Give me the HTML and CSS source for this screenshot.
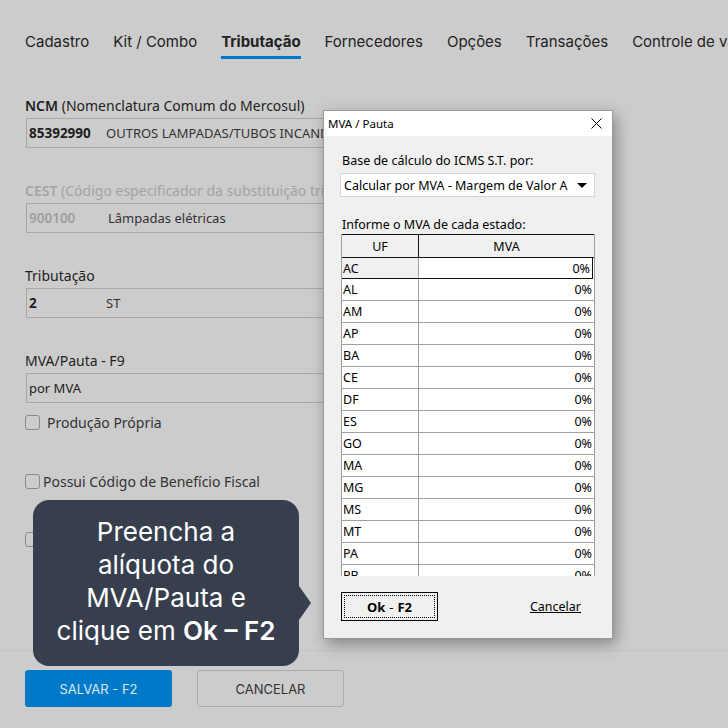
FILE: index.html
```html
<!DOCTYPE html>
<html lang="pt-BR">
<head>
    <meta charset="UTF-8">
    <title>Produto - Tributação</title>
    <link rel="stylesheet" href="styles.css">
</head>
<body>
    <nav class="tabs">
        <span class="tab">Cadastro</span>
        <span class="tab">Kit / Combo</span>
        <span class="tab active">Tributação</span>
        <span class="tab">Fornecedores</span>
        <span class="tab">Opções</span>
        <span class="tab">Transações</span>
        <span class="tab">Controle de validade</span>
    </nav>

    <div class="form">
        <div class="field">
            <label class="field-label"><b>NCM</b> (Nomenclatura Comum do Mercosul)</label>
            <div class="field-box">
                <span class="code">85392990</span>
                <span class="desc">OUTROS LAMPADAS/TUBOS INCANDESCENTES</span>
            </div>
        </div>

        <div class="field disabled">
            <label class="field-label"><b>CEST</b> (Código especificador da substituição tributária)</label>
            <div class="field-box">
                <span class="code">900100</span>
                <span class="desc">Lâmpadas elétricas</span>
            </div>
        </div>

        <div class="field">
            <label class="field-label">Tributação</label>
            <div class="field-box">
                <span class="code">2</span>
                <span class="desc">ST</span>
            </div>
        </div>

        <div class="field last">
            <label class="field-label">MVA/Pauta - F9</label>
            <div class="field-box">
                <span class="plain">por MVA</span>
            </div>
        </div>

        <label class="check"><span class="box"></span>Produção Própria</label>
        <label class="check second"><span class="box"></span>Possui Código de Benefício Fiscal</label>
        <label class="check third"><span class="box"></span></label>
    </div>

    <footer class="actions">
        <button class="btn btn-primary">SALVAR - F2</button>
        <button class="btn btn-outline">CANCELAR</button>
    </footer>

    <!-- dialog -->
    <div class="dialog">
        <div class="dialog-title">
            <span>MVA / Pauta</span>
            <svg class="close" width="11" height="11" viewBox="0 0 11 11">
                <path d="M0.5 0.5 L10.5 10.5 M10.5 0.5 L0.5 10.5" stroke="#000" stroke-width="1"/>
            </svg>
        </div>
        <div class="dialog-body">
            <div class="dlg-label">Base de cálculo do ICMS S.T. por:</div>
            <div class="select">
                <span>Calcular por MVA - Margem de Valor A</span>
                <span class="arrow"></span>
            </div>

            <div class="dlg-label second">Informe o MVA de cada estado:</div>
            <div class="grid">
                <div class="grid-head">
                    <div class="col-uf">UF</div>
                    <div class="col-mva">MVA</div>
                </div>
                <div class="grid-rows" id="rows"></div>
            </div>

            <div class="dialog-foot">
                <button class="ok-btn"><span><b>Ok</b> - <b>F2</b></span></button>
                <a class="cancel-link">Cancelar</a>
            </div>
        </div>
    </div>

    <!-- tooltip -->
    <div class="tip">
        <p>Preencha a<br>alíquota do<br>MVA/Pauta e<br>clique em <b>Ok – F2</b></p>
    </div>

    <script>
        const ufs = ['AC', 'AL', 'AM', 'AP', 'BA', 'CE', 'DF', 'ES', 'GO', 'MA', 'MG', 'MS', 'MT', 'PA', 'PB', 'PE'];
        const rows = document.getElementById('rows');
        ufs.forEach(function(uf, i) {
            const row = document.createElement('div');
            row.className = 'grid-row' + (i === 0 ? ' selected' : '');
            row.innerHTML = '<div class="col-uf">' + uf + '</div><div class="col-mva">0%</div>';
            rows.appendChild(row);
        });
    </script>
</body>
</html>
```

FILE: styles.css
```css
* {
    margin: 0;
    padding: 0;
    box-sizing: border-box;
}

body {
    font-family: 'Noto Sans', sans-serif;
    background: #cccccc;
    width: 728px;
    height: 728px;
    overflow: hidden;
    position: relative;
    color: #1e1e1e;
}

.tabs {
    display: flex;
    gap: 24px;
    padding: 31px 0 0 25px;
    height: 59px;
    font-family: 'Inter', sans-serif;
    font-size: 15px;
    white-space: nowrap;
    color: #222;
    overflow: hidden;
}

.tab {
    height: 28px;
    line-height: 22px;
}

.tab.active {
    font-weight: 700;
    border-bottom: 3px solid #0079c9;
}

.form {
    padding: 37px 0 0 25px;
    height: 591px;
}

.field {
    margin-bottom: 33px;
}

.field.last {
    margin-bottom: 9px;
}

.field-label {
    display: block;
    font-size: 14px;
    line-height: 20px;
    margin-bottom: 2px;
    white-space: nowrap;
}

.field-label b {
    font-weight: 600;
}

.field.disabled .field-label {
    color: #a3a3a3;
}

.field-box {
    width: 450px;
    height: 30px;
    margin-left: 1px;
    border: 1px solid #a6a6a6;
    display: flex;
    align-items: center;
    padding-left: 2px;
    font-size: 13px;
}

.code {
    width: 77px;
    font-weight: 700;
    font-size: 13.5px;
}

.field.disabled .code {
    color: #9e9e9e;
    width: 79px;
    font-weight: 600;
}

.desc {
    color: #333;
    white-space: nowrap;
}

.plain {
    color: #222;
}

.check {
    display: flex;
    align-items: center;
    gap: 7px;
    font-size: 14px;
    height: 20px;
    color: #333;
}

.check .box {
    width: 15px;
    height: 15px;
    border: 1px solid #8a8a8a;
    border-radius: 3px;
}

.check.second {
    margin-top: 39px;
    gap: 3px;
}

.check.third {
    margin-top: 38px;
}

.actions {
    border-top: 1px solid #c4c4c4;
    display: flex;
    gap: 25px;
    padding: 19px 0 0 25px;
    height: 78px;
}

.btn {
    width: 147px;
    height: 37px;
    border-radius: 3px;
    font-family: 'Inter', sans-serif;
    font-size: 13px;
}

.btn-primary {
    background: #0079c9;
    border: none;
    color: #dde6ee;
}

.btn-outline {
    background: transparent;
    border: 1px solid #acacac;
    color: #333;
}

/* dialog */
.dialog {
    position: absolute;
    left: 323px;
    top: 110px;
    width: 290px;
    height: 529px;
    border: 1px solid #999;
    background: #f0f0f0;
    box-shadow: 3px 5px 14px rgba(0,0,0,0.35);
    font-family: 'Noto Sans', sans-serif;
    color: #000;
}

.dialog-title {
    height: 25px;
    background: #fff;
    display: flex;
    align-items: center;
    justify-content: space-between;
    padding: 0 10px 0 4px;
    font-size: 11.5px;
}

.dialog-body {
    padding: 16px 0 0 17px;
}

.dlg-label {
    font-size: 12.5px;
    line-height: 17px;
    margin-left: 1px;
}

.dlg-label.second {
    margin-top: 19px;
}

.select {
    margin-top: 4px;
    width: 255px;
    height: 24px;
    background: #fff;
    border: 1px solid #d6d6d6;
    box-shadow: inset 0 0 0 1px #fff;
    display: flex;
    align-items: center;
    justify-content: space-between;
    padding: 0 7px 0 3px;
    font-size: 12.5px;
    margin-left: -1px;
}

.arrow {
    width: 0;
    height: 0;
    border-left: 5px solid transparent;
    border-right: 5px solid transparent;
    border-top: 5px solid #000;
}

.grid {
    margin-top: 1px;
    width: 254px;
    height: 342px;
    overflow: hidden;
    border-left: 1px solid #a0a0a0;
    border-right: 1px solid #a0a0a0;
    background: #fff;
    font-size: 12.5px;
}

.grid-head {
    display: flex;
    height: 24px;
    background: #f0f0f0;
    border: 1px solid #111;
    margin: 0 -1px;
}

.grid-head div {
    display: flex;
    align-items: center;
    justify-content: center;
}

.col-uf {
    width: 77px;
    border-right: 1px solid #a0a0a0;
}

.grid-head .col-uf {
    border-right-color: #111;
}

.col-mva {
    flex: 1;
}

.grid-row {
    display: flex;
    height: 22px;
    border-bottom: 1px solid #a0a0a0;
}

.grid-row div {
    display: flex;
    align-items: center;
}

.grid-row .col-uf {
    padding-left: 1px;
}

.grid-row .col-mva {
    justify-content: flex-end;
    padding-right: 2px;
}

.grid-row.selected {
    height: 21px;
    border: 1px solid #111;
    border-top: none;
    margin-left: -1px;
    margin-right: 1px;
}

.grid-row.selected .col-uf {
    background: #f0f0f0;
    padding-left: 1px;
}

.dialog-foot {
    display: flex;
    align-items: center;
    justify-content: space-between;
    margin-top: 16px;
    width: 240px;
}

.ok-btn {
    width: 97px;
    height: 29px;
    background: #f0f0f0;
    border: 1px solid #000;
    padding: 2px;
    font-family: 'Noto Sans', sans-serif;
    font-size: 13px;
    color: #000;
}

.ok-btn span {
    display: flex;
    align-items: center;
    justify-content: center;
    gap: 4px;
    height: 100%;
    border: 1px dotted #000;
}

.cancel-link {
    font-size: 12.5px;
    text-decoration: underline;
    color: #000;
}

/* tooltip */
.tip {
    position: absolute;
    left: 33px;
    top: 500px;
    width: 266px;
    height: 166px;
    background: #373f4e;
    border-radius: 16px;
    display: flex;
    align-items: center;
    justify-content: center;
    padding: 0 6px 4px;
}

.tip::after {
    content: '';
    position: absolute;
    right: -12px;
    top: 86px;
    border-top: 17px solid transparent;
    border-bottom: 17px solid transparent;
    border-left: 12px solid #373f4e;
}

.tip p {
    font-family: 'Inter', sans-serif;
    font-size: 26px;
    line-height: 33px;
    color: #fff;
    text-align: center;
    white-space: nowrap;
}

.tip b {
    font-weight: 600;
}
```
